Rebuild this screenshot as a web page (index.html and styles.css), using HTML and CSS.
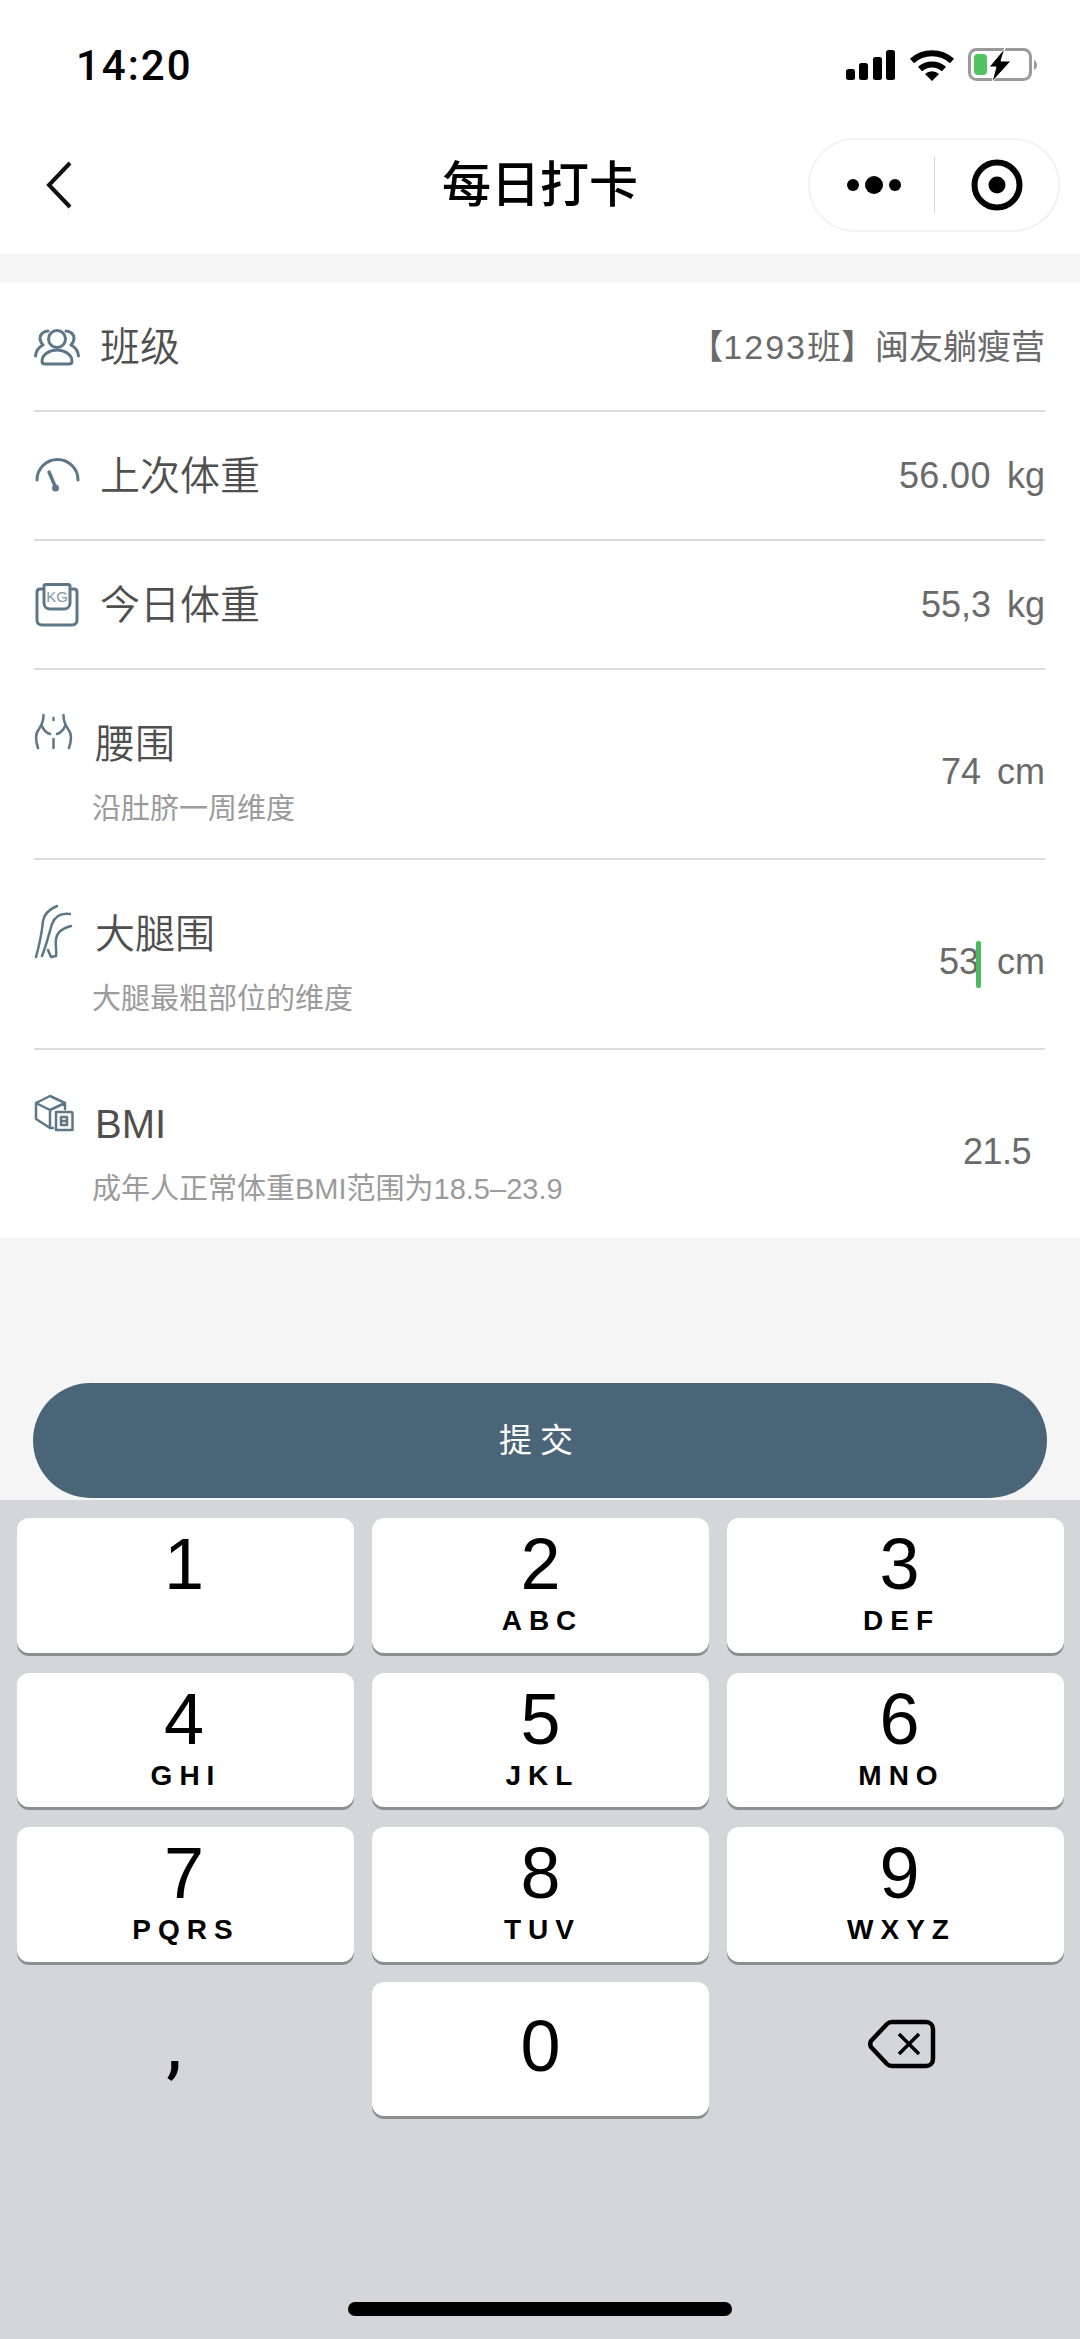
FILE: index.html
```html
<!DOCTYPE html>
<html>
  <head>
    <meta charset="utf-8" />
    <title>每日打卡</title>
    <link rel="stylesheet" href="styles.css">
  </head>
  <body>
    <header class="header">
      <div class="status">
        <span class="time">14:20</span>
        <div class="status-icons">
          <svg class="signal" width="50" height="30" viewBox="0 0 50 30">
            <rect x="0" y="19" width="9" height="11" rx="2.5" />
            <rect x="13" y="13" width="9" height="17" rx="2.5" />
            <rect x="27" y="7" width="9" height="23" rx="2.5" />
            <rect x="40" y="0" width="9" height="30" rx="2.5" />
          </svg>
          <svg class="wifi" width="44" height="34" viewBox="0 0 44 34">
            <path d="M2 13 A30 30 0 0 1 42 13" fill="none" stroke="#000" stroke-width="6" />
            <path d="M10 21 A18 18 0 0 1 34 21" fill="none" stroke="#000" stroke-width="6" />
            <path d="M15 26 A10 10 0 0 1 29 26 L22 33 Z" />
          </svg>
          <svg class="battery" width="70" height="34" viewBox="0 0 70 34">
            <rect x="1.5" y="1.5" width="61" height="30" rx="7" fill="none" stroke="#9a9a9a" stroke-width="3" />
            <rect x="6" y="6" width="13" height="21" rx="4" fill="#4fc35f" />
            <path d="M21 19 L37 0 L33 13 L43 13 L24 34 L28 19 Z" stroke="#fff" stroke-width="1" />
            <path d="M66 12 C68 13 69 15 69 17 C69 19 68 21 66 22 Z" fill="#9a9a9a" />
          </svg>
        </div>
      </div>
      <nav class="nav">
        <svg class="back" width="26" height="48" viewBox="0 0 26 48">
          <path d="M24 2 L3 24 L24 46" />
        </svg>
        <h1 class="title">每日打卡</h1>
        <div class="capsule">
          <div class="capsule-more">
            <i class="dot"></i><i class="dot dot-big"></i><i class="dot"></i>
          </div>
          <div class="capsule-line"></div>
          <svg class="capsule-target" width="52" height="52" viewBox="0 0 52 52">
            <circle cx="26" cy="26" r="22.5" fill="none" stroke="#000" stroke-width="6" />
            <circle cx="26" cy="26" r="8.5" />
          </svg>
        </div>
      </nav>
    </header>

    <main class="content">
      <section class="list">
        <div class="row">
          <div class="row-icon">
            <svg width="46" height="38" viewBox="0 0 46 38">
              <circle cx="23" cy="11" r="8.5" />
              <path d="M11 36 H35 C37 36 38 35 38 33 C38 27 31 22 23 22 S8 27 8 33 C8 35 9 36 11 36 Z" />
              <path d="M14 3 C9 3 6 7 6 10 C6 13 7 15 9 17 C5 19 2 23 1.500 28" />
              <path d="M32 3 C37 3 40 7 40 10 C40 13 39 15 37 17 C41 19 44 23 44.500 28" />
            </svg>
          </div>
          <span class="label">班级</span>
          <span class="value value-class">【<span class="class-no">1293</span>班】闽友躺瘦营</span>
        </div>
        <div class="row">
          <div class="row-icon">
            <svg width="46" height="38" viewBox="0 0 46 38">
              <path d="M3 23 A20.500 20.500 0 0 1 44 23" />
              <path class="needle" d="M15 15 L21 29" />
              <circle class="fill" cx="21.500" cy="31" r="3.500" />
            </svg>
          </div>
          <span class="label">上次体重</span>
          <span class="value"><span class="num-text">56.00</span><span>kg</span></span>
        </div>
        <div class="row">
          <div class="row-icon">
            <svg width="46" height="44" viewBox="0 0 46 44">
              <path d="M8 6 H6 C4 6 3 7 3 9 V37 C3 40 5 42 8 42 H38 C41 42 43 40 43 37 V9 C43 7 42 6 40 6 H38" />
              <path d="M10 3 C10 2 11 1.500 12 1.500 H34 C35 1.500 36 2 36 3 V20 C36 24 33 26 30 26 H16 C13 26 10 24 10 20 Z" />
              <text class="kg" x="23" y="19">KG</text>
            </svg>
          </div>
          <span class="label">今日体重</span>
          <span class="value"><span>55,3</span><span>kg</span></span>
        </div>
        <div class="row row-tall">
          <div class="row-icon">
            <svg width="40" height="36" viewBox="0 0 40 36">
              <path d="M9.500 1 C9.500 6 8.500 10 5 15 C1.500 19 1 25 4 34" />
              <path d="M29.500 1 C29.500 6 30.500 10 34 15 C37.500 19 38 25 35 34" />
              <path d="M8 12 C10 17 13 19 16 20" />
              <path d="M31 12 C29 17 26 19 23 20" />
              <path d="M19.500 4 V6 M19.500 25 V34" />
            </svg>
          </div>
          <div class="row-text">
            <span class="label">腰围</span>
            <span class="sub">沿肚脐一周维度</span>
          </div>
          <span class="value value-low"><span>74</span><span>cm</span></span>
        </div>
        <div class="row row-tall">
          <div class="row-icon">
            <svg width="40" height="56" viewBox="0 0 40 56">
              <path d="M23 2 C16 5 10 10 9 17 C8 28 5 42 2 53" />
              <path d="M36 10 C28 9 21 12 18 20 C15 30 12 42 8 52" />
              <path d="M37 22 C29 24 23 28 22 35 C21 42 23 47 22 52 L17 53 L14 46" />
            </svg>
          </div>
          <div class="row-text">
            <span class="label">大腿围</span>
            <span class="sub">大腿最粗部位的维度</span>
          </div>
          <span class="value value-low"><span class="typed">53<i class="caret"></i></span><span>cm</span></span>
        </div>
        <div class="row row-tall row-last">
          <div class="row-icon">
            <svg width="40" height="38" viewBox="0 0 40 38">
              <path d="M16 2 L31 9 V15 M16 2 L2 9 V25 L16 34 H19 M2 9 L16 16 L31 9 M16 16 V34" />
              <path d="M22 18 H37 C38 18 38.500 19 38.500 20 V36 H22 Z" />
              <path d="M27 23 H33 V31 H27 Z M27 27 H33" />
            </svg>
          </div>
          <div class="row-text">
            <span class="label">BMI</span>
            <span class="sub">成年人正常体重BMI范围为18.5–23.9</span>
          </div>
          <span class="value value-low value-bmi">21.5</span>
        </div>
      </section>
      <div class="submit-wrap">
        <button class="submit">提交</button>
      </div>
    </main>

    <section class="keyboard">
      <div class="keys">
        <div class="key"><span class="num">1</span></div>
        <div class="key"><span class="num">2</span><span class="abc">ABC</span></div>
        <div class="key"><span class="num">3</span><span class="abc">DEF</span></div>
        <div class="key"><span class="num">4</span><span class="abc">GHI</span></div>
        <div class="key"><span class="num">5</span><span class="abc">JKL</span></div>
        <div class="key"><span class="num">6</span><span class="abc">MNO</span></div>
        <div class="key"><span class="num">7</span><span class="abc">PQRS</span></div>
        <div class="key"><span class="num">8</span><span class="abc">TUV</span></div>
        <div class="key"><span class="num">9</span><span class="abc">WXYZ</span></div>
        <div class="key key-plain"><span class="comma">,</span></div>
        <div class="key key-zero"><span class="num">0</span></div>
        <div class="key key-plain">
          <svg class="backspace" width="68" height="50" viewBox="0 0 68 50">
            <path class="back-outline" d="M24 3 H58 C62 3 65 6 65 10 V40 C65 44 62 47 58 47 H24 C22 47 20 46 19 45 L3 28 C2 26 2 24 3 22 L19 5 C20 4 22 3 24 3 Z" />
            <path class="back-x" d="M31 15 L51 35 M51 15 L31 35" />
          </svg>
        </div>
      </div>
      <div class="home-bar"></div>
    </section>
  </body>
</html>
```

FILE: styles.css
```css
html,
body {
  margin: 0;
  padding: 0;
}
body {
  display: flex;
  flex-direction: column;
  width: 1080px;
  height: 2339px;
  overflow: hidden;
  background-color: #f5f5f5;
  color: #000000;
  font-family: "Liberation Sans", "Noto Sans CJK SC", sans-serif;
}

/* status bar + title bar */
.header {
  background-color: #ffffff;
  height: 254px;
}
.status {
  display: flex;
  align-items: center;
  justify-content: space-between;
  height: 130px;
  padding: 0 42px 0 76px;
}
.time {
  font-family: Roboto, sans-serif;
  font-size: 42px;
  font-weight: 500;
  letter-spacing: 2px;
}
.status-icons {
  display: flex;
  align-items: center;
  gap: 14px;
}
.signal,
.wifi {
  display: block;
}
.nav {
  display: grid;
  grid-template-columns: 1fr auto 1fr;
  align-items: center;
  height: 110px;
  padding: 0 20px 14px;
}
.back {
  margin-left: 26px;
  fill: none;
  stroke: #111111;
  stroke-width: 4;
}
.title {
  margin: 0;
  padding-bottom: 8px;
  font-size: 49px;
  line-height: 60px;
  font-weight: 500;
  font-family: "Noto Sans CJK SC", sans-serif;
}
.capsule {
  display: flex;
  align-items: center;
  justify-self: end;
  box-sizing: border-box;
  width: 252px;
  height: 94px;
  border: 2px solid #f2f2f2;
  border-radius: 47px;
}
.capsule-more {
  display: flex;
  align-items: center;
  justify-content: center;
  gap: 6px;
  width: 124px;
  padding-left: 4px;
  box-sizing: border-box;
}
.dot {
  width: 12px;
  height: 12px;
  border-radius: 50%;
  background-color: #000000;
}
.dot-big {
  width: 18px;
  height: 18px;
}
.capsule-line {
  width: 1px;
  height: 56px;
  background-color: #d8d8d8;
}
.capsule-target {
  margin-left: 36px;
}

/* form */
.content {
  flex: 1;
}
.list {
  margin-top: 29px;
  padding: 0 35px 0 34px;
  background-color: #ffffff;
}
.row {
  display: flex;
  align-items: center;
  box-sizing: border-box;
  height: 129px;
  border-bottom: 2px solid #dcdcdc;
}
.row-tall {
  align-items: flex-start;
  height: 190px;
  padding-top: 44px;
}
.row-last {
  height: 188px;
  border-bottom: none;
}
.row-icon {
  flex: none;
  width: 66px;
}
.row-icon svg {
  display: block;
  fill: none;
  stroke: #5d7787;
  stroke-width: 3;
  stroke-linecap: round;
  stroke-linejoin: round;
}
.row-icon .needle {
  stroke-width: 3.5;
}
.row-icon .fill {
  fill: #5d7787;
  stroke: none;
}
.row-icon .kg {
  fill: #84959f;
  stroke: none;
  font-size: 15px;
  text-anchor: middle;
}
.row-tall .row-icon {
  width: 58px;
}
.row-tall .row-icon svg {
  stroke-width: 2.5;
}
.row-text {
  display: flex;
  flex-direction: column;
}
.label {
  font-size: 40px;
  line-height: 60px;
  color: #4f4f4f;
  font-weight: 350;
}
.row-text .label {
  margin-left: 3px;
}
.sub {
  margin-top: 15px;
  font-size: 29px;
  line-height: 40px;
  color: #9b9b9b;
}
.value {
  display: flex;
  gap: 16px;
  margin-left: auto;
  font-size: 36px;
  line-height: 44px;
  color: #6a6a6a;
}
.value-class {
  display: block;
  font-size: 34px;
}
.class-no {
  letter-spacing: 2px;
}
.num-text {
  letter-spacing: 0.4px;
}
.value-low {
  margin-top: 36px;
}
.value-bmi {
  margin-right: 14px;
  letter-spacing: -0.5px;
}
.caret {
  display: inline-block;
  width: 5px;
  height: 47px;
  margin-left: -3px;
  border-radius: 2px;
  background-color: #4cb860;
  vertical-align: middle;
}
.submit-wrap {
  padding: 145px 33px 0;
}
.submit {
  display: block;
  width: 100%;
  height: 115px;
  padding: 0 0 5px;
  border: none;
  border-radius: 58px;
  background-color: #4a6578;
  color: #ffffff;
  font-family: "Noto Sans CJK SC", sans-serif;
  font-size: 33px;
  letter-spacing: 8px;
}

/* number pad */
.keyboard {
  display: flex;
  flex-direction: column;
  height: 839px;
  box-sizing: border-box;
  padding: 18px 17px 23px;
  background-color: #d5d6da;
}
.keys {
  display: grid;
  grid-template-columns: repeat(3, 337px);
  grid-auto-rows: 134.5px;
  column-gap: 18px;
  row-gap: 20px;
}
.key {
  display: flex;
  flex-direction: column;
  align-items: center;
  box-sizing: border-box;
  border-radius: 12px;
  background-color: #ffffff;
  box-shadow: 0 3px 0 #8d8e92;
}
.key:nth-child(3n + 1) {
  padding-right: 3px;
}
.key:nth-child(3n) {
  padding-left: 8px;
}
.key-plain {
  align-items: center;
  justify-content: center;
  background: none;
  box-shadow: none;
}
.key-zero {
  justify-content: center;
  padding-bottom: 5px;
}
.key-zero .num {
  margin-top: 0;
}
.num {
  margin-top: 8px;
  font-size: 72px;
  line-height: 76px;
}
.abc {
  margin: 4px 0 0 4px;
  font-size: 28px;
  line-height: 30px;
  font-weight: bold;
  letter-spacing: 7px;
}
.comma {
  font-family: Roboto, sans-serif;
  font-size: 80px;
  line-height: 80px;
  margin: -12px 20px 0 0;
}
.back-outline {
  fill: none;
  stroke: #000000;
  stroke-width: 4.5;
}
.back-x {
  fill: none;
  stroke: #000000;
  stroke-width: 3.5;
}
.backspace {
  margin: 0 0 9px 4px;
}
.home-bar {
  align-self: center;
  width: 384px;
  height: 14px;
  margin-top: auto;
  border-radius: 7px;
  background-color: #000000;
}
```
